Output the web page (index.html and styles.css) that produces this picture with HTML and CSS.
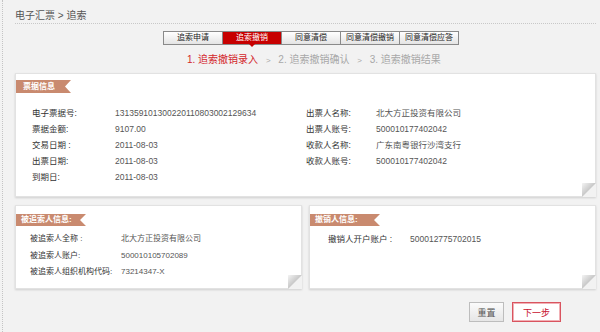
FILE: index.html
```html
<!DOCTYPE html>
<html lang="zh-CN">
<head>
  <meta charset="UTF-8" />
  <title>电子汇票 - 追索撤销</title>
  <link rel="stylesheet" href="styles.css">
</head>
<body>
  <div class="page">

    <!-- breadcrumb -->
    <div class="crumb">电子汇票 &gt; 追索</div>

    <!-- tabs -->
    <nav class="tabs">
      <a>追索申请</a>
      <a class="active">追索撤销</a>
      <a>同意清偿</a>
      <a>同意清偿撤销</a>
      <a>同意清偿应答</a>
    </nav>

    <!-- steps -->
    <div class="steps">
      <span class="cur">1. 追索撤销录入</span>
      <span class="sep">&gt;</span>
      <span>2. 追索撤销确认</span>
      <span class="sep">&gt;</span>
      <span>3. 追索撤销结果</span>
    </div>

    <!-- bill info -->
    <div class="panel panel-main">
      <div class="ribbon">票据信息</div>
      <div class="info">
        <div class="col col-left">
          <div class="row"><span class="lbl">电子票据号:</span><span class="val">131359101300220110803002129634</span></div>
          <div class="row"><span class="lbl">票据金额:</span><span class="val">9107.00</span></div>
          <div class="row"><span class="lbl">交易日期 :</span><span class="val">2011-08-03</span></div>
          <div class="row"><span class="lbl">出票日期:</span><span class="val">2011-08-03</span></div>
          <div class="row"><span class="lbl">到期日:</span><span class="val">2011-08-03</span></div>
        </div>
        <div class="col col-right">
          <div class="row"><span class="lbl">出票人名称:</span><span class="val">北大方正投资有限公司</span></div>
          <div class="row"><span class="lbl">出票人账号:</span><span class="val">500010177402042</span></div>
          <div class="row"><span class="lbl">收款人名称:</span><span class="val">广东南粤银行沙湾支行</span></div>
          <div class="row"><span class="lbl">收款人账号:</span><span class="val">500010177402042</span></div>
        </div>
      </div>
    </div>

    <div class="panel-row">
      <div class="panel panel-small">
        <div class="ribbon ribbon-sm">被追索人信息:</div>
        <div class="col col-debtor">
          <div class="row"><span class="lbl">被追索人全称 :</span><span class="val">北大方正投资有限公司</span></div>
          <div class="row"><span class="lbl">被追索人账户:</span><span class="val">500010105702089</span></div>
          <div class="row"><span class="lbl">被追索人组织机构代码:</span><span class="val">73214347-X</span></div>
        </div>
      </div>
      <div class="panel panel-small">
        <div class="ribbon ribbon-sm">撤销人信息:</div>
        <div class="col col-revoker">
          <div class="row"><span class="lbl">撤销人开户账户 :</span><span class="val">500012775702015</span></div>
        </div>
      </div>
    </div>

    <div class="actions">
      <button type="button" class="btn">重置</button>
      <button type="button" class="btn btn-next">下一步</button>
    </div>

  </div>
</body>
</html>
```

FILE: styles.css
```css
body {
  margin: 0;
  background-color: #f2f2f2;
  font-family: "Liberation Sans", "Noto Sans CJK SC", sans-serif;
  color: #333;
}

.page {
  margin-left: 2px;
  border-left: 1px dotted #c4c4c4;
  height: 332px;
  box-sizing: border-box;
}

.crumb {
  margin: 0 4px 0 12px;
  padding-top: 9px;
  height: 14px;
  line-height: 14px;
  font-size: 10px;
  color: #555;
  border-bottom: 1px dotted #c8c8c8;
}

.tabs {
  display: flex;
  margin: 7px 0 0 160px;
  width: max-content;
  border: 1px solid #8a8a8a;
  background: linear-gradient(#ffffff, #e4e4e4);
}

.tabs a {
  position: relative;
  width: 58px;
  height: 12px;
  line-height: 12px;
  text-align: center;
  font-size: 8px;
  color: #222;
  border-left: 1px solid #8a8a8a;
}

.tabs a:first-child {
  border-left: none;
}

.tabs a.active {
  background-color: #c70000;
  color: #fff;
}

.tabs a.active::after {
  content: "";
  position: absolute;
  left: 26px;
  top: 12px;
  border-left: 3px solid transparent;
  border-right: 3px solid transparent;
  border-top: 3px solid #c70000;
}

.steps {
  margin: 9px 0 0 184px;
  height: 12px;
  line-height: 12px;
  font-size: 10px;
  color: #a8a8a8;
}

.steps .cur {
  color: #d2262c;
}

.steps .sep {
  margin: 0 5px;
  font-size: 8px;
}

.panel {
  position: relative;
  background: #fff;
  border: 1px solid #e2e2e2;
  box-shadow: 0 1px 2px rgba(0, 0, 0, 0.15);
}

.panel::after {
  content: "";
  position: absolute;
  right: -1px;
  bottom: -1px;
  width: 14px;
  height: 14px;
  background: linear-gradient(to bottom right, #f4f4f4 0%, #c8c8c8 49%, #f2f2f2 51%);
}

.panel-main {
  margin: 7px 4px 0 12px;
  height: 124px;
  box-sizing: border-box;
  padding-top: 6px;
}

.ribbon {
  width: 55px;
  height: 13px;
  line-height: 13px;
  padding-left: 7px;
  box-sizing: border-box;
  background-color: #c98a6f;
  color: #fff;
  font-size: 8px;
  font-weight: bold;
  clip-path: polygon(0 0, 100% 0, calc(100% - 6px) 50%, 100% 100%, 0 100%);
}

.ribbon-sm {
  width: 70px;
  height: 12px;
  line-height: 12px;
  padding-left: 5px;
}

.info {
  display: flex;
  margin-top: 12px;
  padding-left: 16px;
}

.col-left {
  width: 274px;
}

.row {
  display: flex;
  height: 16px;
  line-height: 16px;
  font-size: 8.5px;
  white-space: nowrap;
}

.lbl {
  flex-shrink: 0;
  color: #333;
}

.val {
  color: #555;
}

.col-left .lbl {
  width: 83px;
}

.col-right .lbl {
  width: 70px;
}

.panel-row {
  display: flex;
  gap: 7px;
  margin: 8px 4px 0 12px;
}

.panel-small {
  flex: 1;
  height: 84px;
  box-sizing: border-box;
  padding-top: 8px;
}

.col-debtor {
  margin: 5px 0 0 14px;
}

.col-debtor .row {
  height: 16.5px;
  line-height: 16.5px;
  font-size: 8px;
}

.col-debtor .lbl {
  width: 91px;
}

.col-revoker {
  margin: 5px 0 0 18px;
}

.col-revoker .lbl {
  width: 82px;
}

.actions {
  display: flex;
  justify-content: flex-end;
  gap: 8px;
  margin: 13px 39px 0 0;
}

.btn {
  height: 20px;
  width: 35px;
  padding: 0;
  border: 1px solid #bdbdbd;
  background: linear-gradient(#fbfbfb, #e6e6e6);
  font-family: inherit;
  font-size: 9px;
  color: #555;
}

.btn-next {
  width: 49px;
  border: 1px solid #d9545f;
  box-shadow: inset 0 0 0 1px #f1b0b5;
  background: #fff;
  color: #c8102e;
}
```
